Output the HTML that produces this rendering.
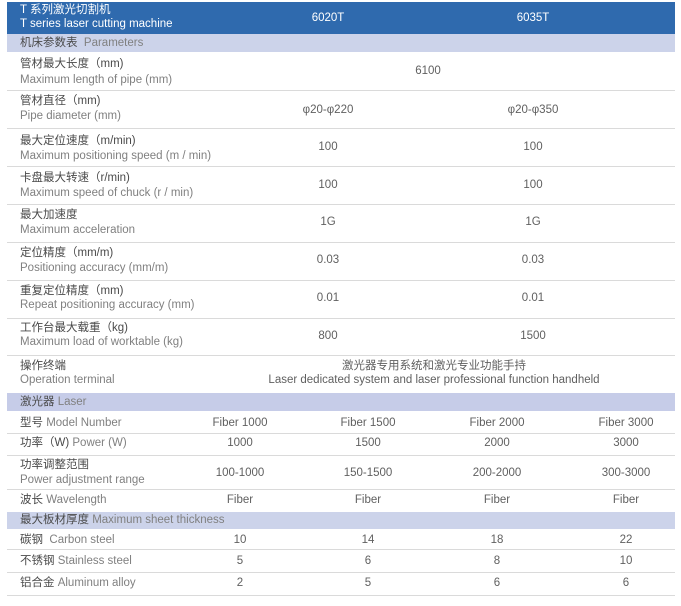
<!DOCTYPE html>
<html><head><meta charset="utf-8"><style>
body{margin:0;width:681px;height:606px;background:#fff;position:relative;overflow:hidden;font-family:"Liberation Sans","Noto Sans CJK SC",sans-serif;}
.a{position:absolute;white-space:nowrap;font-size:11.5px;line-height:13px;}
.c{color:#4a4a4a;}
.e{color:#808080;}
.v{color:#606060;transform:translateX(-50%);}
.ln{position:absolute;left:7px;width:668px;height:1px;background:#dadada;}
.band{position:absolute;left:7px;width:668px;background:#ccd3ea;}
</style></head><body>
<div style="position:absolute;left:7px;top:2px;width:668px;height:32px;background:#2f6aae"></div>
<div class="a" style="left:20px;top:4px;color:#fff">T 系列激光切割机</div>
<div class="a" style="left:20px;top:18px;color:#fff">T series laser cutting machine</div>
<div class="a" style="left:328px;top:12px;color:#fff;transform:translateX(-50%)">6020T</div>
<div class="a" style="left:533px;top:12px;color:#fff;transform:translateX(-50%)">6035T</div>
<div class="band" style="top:34px;height:18px"></div>
<div class="a c" style="left:20px;top:37px">机床参数表 <span class="e">&nbsp;Parameters</span></div>

<div class="a c" style="left:20px;top:58px">管材最大长度（mm)</div><div class="a e" style="left:20px;top:74px">Maximum length of pipe (mm)</div>
<div class="a v" style="left:428px;top:65px">6100</div><div class="ln" style="top:90px"></div>

<div class="a c" style="left:20px;top:95px">管材直径（mm)</div><div class="a e" style="left:20px;top:110px">Pipe diameter (mm)</div>
<div class="a v" style="left:328px;top:104px">φ20-φ220</div><div class="a v" style="left:533px;top:104px">φ20-φ350</div><div class="ln" style="top:128px"></div>

<div class="a c" style="left:20px;top:135px">最大定位速度（m/min)</div><div class="a e" style="left:20px;top:150px">Maximum positioning speed (m / min)</div>
<div class="a v" style="left:328px;top:141px">100</div><div class="a v" style="left:533px;top:141px">100</div><div class="ln" style="top:166px"></div>

<div class="a c" style="left:20px;top:172px">卡盘最大转速（r/min)</div><div class="a e" style="left:20px;top:187px">Maximum speed of chuck (r / min)</div>
<div class="a v" style="left:328px;top:179px">100</div><div class="a v" style="left:533px;top:179px">100</div><div class="ln" style="top:204px"></div>

<div class="a c" style="left:20px;top:209px">最大加速度</div><div class="a e" style="left:20px;top:224px">Maximum acceleration</div>
<div class="a v" style="left:328px;top:216px">1G</div><div class="a v" style="left:533px;top:216px">1G</div><div class="ln" style="top:242px"></div>

<div class="a c" style="left:20px;top:247px">定位精度（mm/m)</div><div class="a e" style="left:20px;top:262px">Positioning accuracy (mm/m)</div>
<div class="a v" style="left:328px;top:254px">0.03</div><div class="a v" style="left:533px;top:254px">0.03</div><div class="ln" style="top:280px"></div>

<div class="a c" style="left:20px;top:285px">重复定位精度（mm)</div><div class="a e" style="left:20px;top:299px">Repeat positioning accuracy (mm)</div>
<div class="a v" style="left:328px;top:292px">0.01</div><div class="a v" style="left:533px;top:292px">0.01</div><div class="ln" style="top:318px"></div>

<div class="a c" style="left:20px;top:322px">工作台最大载重（kg)</div><div class="a e" style="left:20px;top:336px">Maximum load of worktable (kg)</div>
<div class="a v" style="left:328px;top:330px">800</div><div class="a v" style="left:533px;top:330px">1500</div><div class="ln" style="top:355px"></div>

<div class="a c" style="left:20px;top:360px">操作终端</div><div class="a e" style="left:20px;top:374px">Operation terminal</div>
<div class="a v" style="left:434px;top:360px">激光器专用系统和激光专业功能手持</div><div class="a v" style="left:434px;top:374px">Laser dedicated system and laser professional function handheld</div>

<div class="band" style="top:393px;height:18px;background:#c6cce8"></div>
<div class="a c" style="left:20px;top:396px">激光器 <span class="e">Laser</span></div>

<div class="a c" style="left:20px;top:417px">型号 <span class="e">Model Number</span></div>
<div class="a v" style="left:240px;top:417px">Fiber 1000</div><div class="a v" style="left:368px;top:417px">Fiber 1500</div><div class="a v" style="left:497px;top:417px">Fiber 2000</div><div class="a v" style="left:626px;top:417px">Fiber 3000</div><div class="ln" style="top:433px"></div>

<div class="a c" style="left:20px;top:437px">功率（W) <span class="e">Power (W)</span></div>
<div class="a v" style="left:240px;top:437px">1000</div><div class="a v" style="left:368px;top:437px">1500</div><div class="a v" style="left:497px;top:437px">2000</div><div class="a v" style="left:626px;top:437px">3000</div><div class="ln" style="top:455px"></div>

<div class="a c" style="left:20px;top:459px">功率调整范围</div><div class="a e" style="left:20px;top:474px">Power adjustment range</div>
<div class="a v" style="left:240px;top:467px">100-1000</div><div class="a v" style="left:368px;top:467px">150-1500</div><div class="a v" style="left:497px;top:467px">200-2000</div><div class="a v" style="left:626px;top:467px">300-3000</div><div class="ln" style="top:489px"></div>

<div class="a c" style="left:20px;top:494px">波长 <span class="e">Wavelength</span></div>
<div class="a v" style="left:240px;top:494px">Fiber</div><div class="a v" style="left:368px;top:494px">Fiber</div><div class="a v" style="left:497px;top:494px">Fiber</div><div class="a v" style="left:626px;top:494px">Fiber</div>

<div class="band" style="top:512px;height:17px"></div>
<div class="a c" style="left:20px;top:514px">最大板材厚度 <span class="e">Maximum sheet thickness</span></div>

<div class="a c" style="left:20px;top:534px">碳钢 &nbsp;<span class="e">Carbon steel</span></div>
<div class="a v" style="left:240px;top:534px">10</div><div class="a v" style="left:368px;top:534px">14</div><div class="a v" style="left:497px;top:534px">18</div><div class="a v" style="left:626px;top:534px">22</div><div class="ln" style="top:549px"></div>

<div class="a c" style="left:20px;top:555px">不锈钢 <span class="e">Stainless steel</span></div>
<div class="a v" style="left:240px;top:555px">5</div><div class="a v" style="left:368px;top:555px">6</div><div class="a v" style="left:497px;top:555px">8</div><div class="a v" style="left:626px;top:555px">10</div><div class="ln" style="top:572px"></div>

<div class="a c" style="left:20px;top:577px">铝合金 <span class="e">Aluminum alloy</span></div>
<div class="a v" style="left:240px;top:577px">2</div><div class="a v" style="left:368px;top:577px">5</div><div class="a v" style="left:497px;top:577px">6</div><div class="a v" style="left:626px;top:577px">6</div><div class="ln" style="top:595px"></div>
</body></html>
